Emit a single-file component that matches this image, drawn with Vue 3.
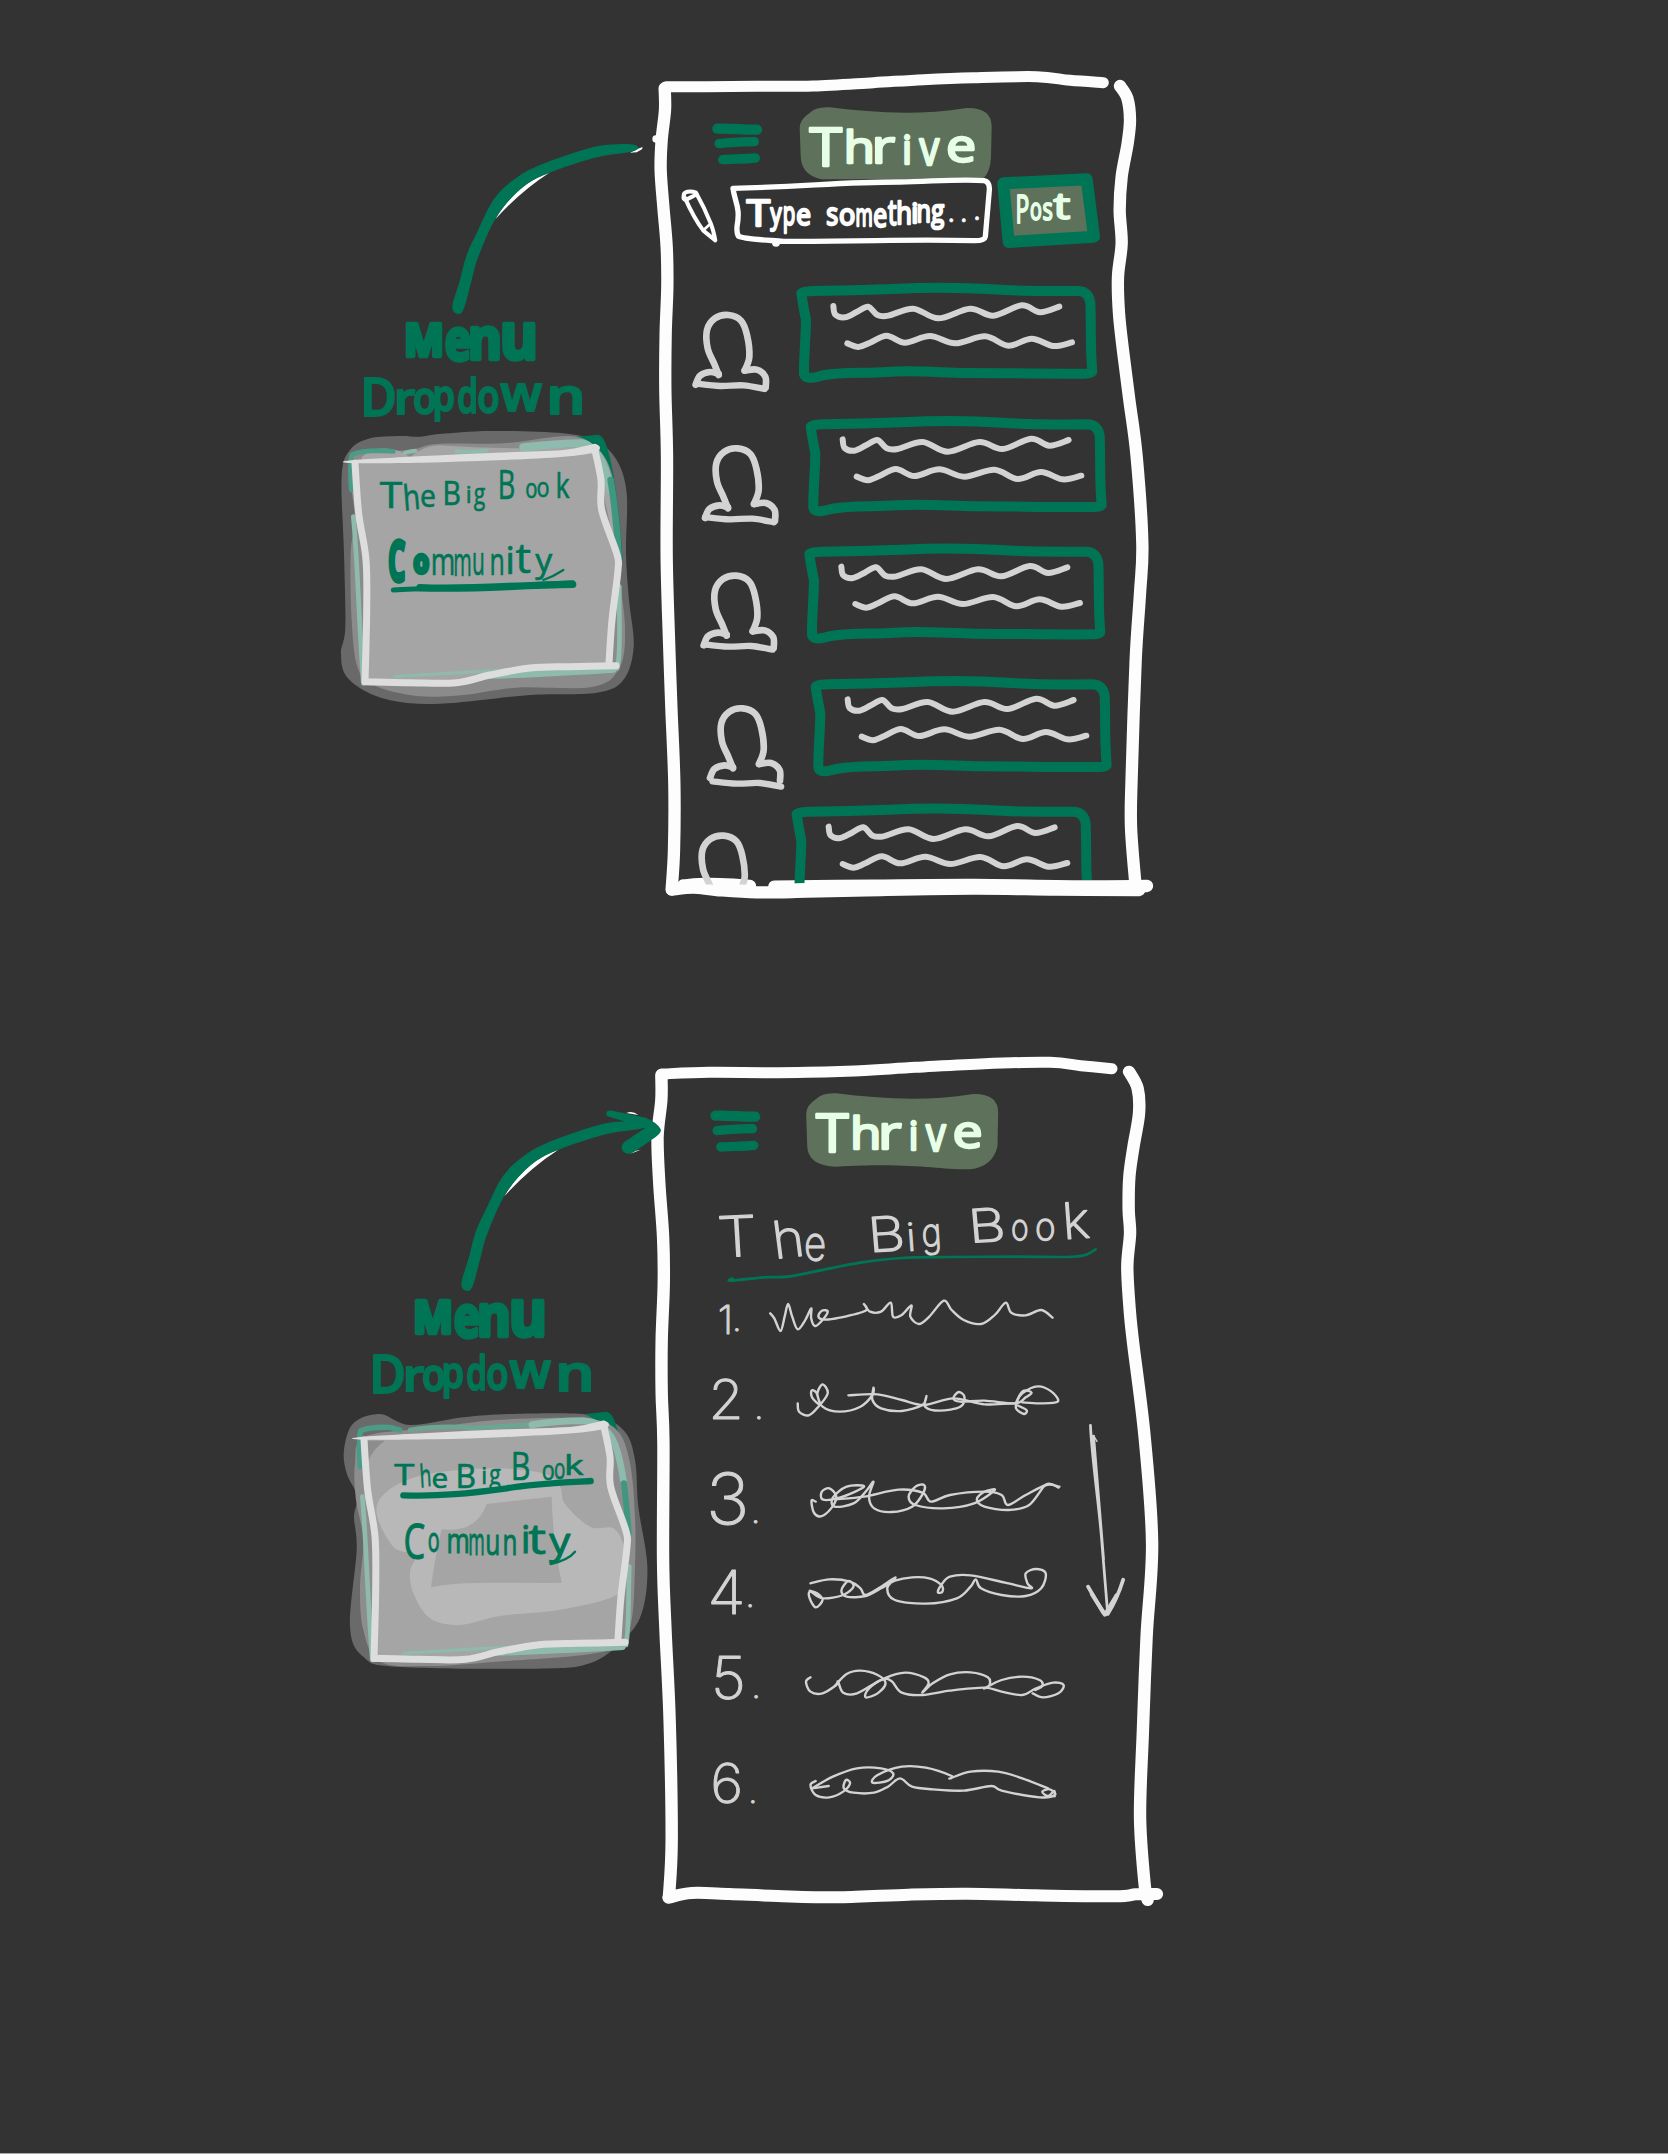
<script setup>
// Smooth curve through a list of points (Catmull-Rom converted to cubic beziers)
function curve(flat, closed = false) {
  const p = []
  for (let i = 0; i < flat.length; i += 2) p.push([flat[i], flat[i + 1]])
  const n = p.length
  const at = (i) => (closed ? p[(i + n) % n] : p[Math.max(0, Math.min(n - 1, i))])
  let d = `M${p[0][0]} ${p[0][1]}`
  for (let i = 0; i < (closed ? n : n - 1); i++) {
    const [a, b, c, e] = [at(i - 1), at(i), at(i + 1), at(i + 2)]
    d += `C${b[0] + (c[0] - a[0]) / 6} ${b[1] + (c[1] - a[1]) / 6} ${c[0] - (e[0] - b[0]) / 6} ${c[1] - (e[1] - b[1]) / 6} ${c[0]} ${c[1]}`
  }
  return closed ? d + 'Z' : d
}

// Side bearings as fractions of the advance: [left, right]
const bearings = {
  T: [0.02, 0.02], M: [0.11, 0.11], D: [0.13, 0.07], B: [0.15, 0.07], C: [0.09, 0.05], P: [0.16, 0.06],
  h: [0.14, 0.12], n: [0.14, 0.12], m: [0.09, 0.08], u: [0.13, 0.14], r: [0.2, 0.02], p: [0.14, 0.09],
  d: [0.09, 0.14], o: [0.09, 0.09], e: [0.09, 0.07], s: [0.08, 0.08], g: [0.04, 0.03], k: [0.15, 0],
  v: [0, 0], y: [0, 0], w: [0.02, 0.02], t: [0.05, 0.05],
}
// Letters are written as [char, left, right, baseline, size, weight, outline, tilt]
function letters(list, weight, outline) {
  return list.map(([s, l, r, y, size, w = weight, sw = outline, tilt = 0]) => {
    const base = { s, y, size, weight: w, sw, tilt }
    const b = bearings[s]
    if (!b) return { ...base, x: s === ' ' ? l : l - size * 0.08 + sw / 2 }
    const adv = (r - l - sw) / (1 - b[0] - b[1])
    return { ...base, x: l + sw / 2 - adv * b[0], len: adv }
  })
}

const frameTop = [
  curve([78, 80, 200, 80, 350, 79, 520, 78, 700, 68, 850, 59, 1000, 53, 1190, 50, 1290, 61, 1390, 68]),
  curve([74, 85, 75, 150, 65, 240, 62, 330, 70, 440, 80, 560, 82, 680, 77, 820, 76, 990, 81, 1190, 80, 1490, 87, 1740, 94, 1940, 103, 2170, 102, 2370, 95, 2488]),
  curve([96, 2489, 160, 2483, 230, 2490, 350, 2497, 500, 2495, 680, 2491, 1000, 2486, 1250, 2489, 1498, 2490]),
  curve([130, 2476, 200, 2472, 280, 2474, 330, 2478]),
  curve([403, 2480, 700, 2477, 1000, 2475, 1300, 2479, 1521, 2478]),
  curve([1440, 78, 1462, 115, 1470, 180, 1463, 250, 1445, 350, 1439, 450, 1445, 550, 1434, 650, 1437, 760, 1450, 880, 1468, 1020, 1490, 1190, 1507, 1450, 1500, 1600, 1487, 1800, 1475, 2150, 1473, 2300, 1486, 2470]),
]
const frameBottom = [
  curve([63, 72, 200, 67, 400, 68, 600, 64, 800, 52, 1000, 41, 1190, 37, 1280, 47, 1370, 56]),
  curve([62, 75, 62, 150, 51, 260, 56, 400, 67, 560, 69, 700, 63, 870, 63, 1030, 68, 1180, 67, 1530, 74, 1740, 86, 2010, 92, 2370, 84, 2542]),
  curve([83, 2543, 150, 2529, 260, 2532, 400, 2538, 580, 2542, 780, 2534, 950, 2531, 1150, 2536, 1380, 2539, 1440, 2533, 1501, 2532]),
  curve([1420, 65, 1445, 115, 1449, 190, 1433, 290, 1421, 380, 1419, 480, 1423, 550, 1415, 650, 1422, 780, 1432, 880, 1465, 1158, 1487, 1480, 1471, 1760, 1460, 2050, 1452, 2300, 1465, 2500, 1474, 2550]),
]

const posts = [
  { x: 0, y: 0, base: 0 },
  { x: 28, y: 400, base: 0 },
  { x: 24, y: 782, base: 0 },
  { x: 43, y: 1180, base: 13 },
  { x: -14, y: 1562, base: 0 },
]
const bubble = 'M484 700Q488 694 520 693C600 692 680 690 760 687C860 682 960 682 1060 688C1140 694 1220 694 1315 693Q1346 695 1351 728C1354 800 1350 860 1357 935Q1352 942 1330 941C1200 942 1100 939 980 939C900 938 820 930 740 936C680 941 600 935 545 947Q497 962 492 943C491 900 497 840 498 780C492 750 488 730 484 700Z'
const waves = [
  curve([580, 738, 586, 764, 615, 772, 650, 756, 684, 740, 712, 765, 745, 767, 820, 746, 895, 775, 990, 746, 1060, 767, 1145, 736, 1200, 757, 1258, 740]),
  curve([622, 850, 655, 861, 690, 848, 740, 827, 795, 848, 870, 828, 945, 850, 1035, 829, 1105, 857, 1175, 836, 1240, 858, 1296, 847]),
]
const person = [
  curve([236, 945, 222, 910, 203, 865, 201, 810, 225, 775, 265, 765, 303, 782, 321, 825, 328, 890, 314, 932]),
  curve([236, 942, 210, 936, 180, 947, 167, 974]),
  curve([314, 932, 350, 929, 376, 950, 377, 982]),
]
const personBase = curve([168, 971, 240, 978, 310, 976, 374, 987])

const arrowBody = curve([367, 560, 390, 480, 410, 405, 442, 335, 490, 240, 550, 180, 630, 135, 780, 84, 860, 73, 912, 74, 924, 85, 900, 96, 800, 112, 655, 160, 575, 205, 500, 290, 445, 410, 425, 480, 402, 565, 384, 582], true)

const cardEdges = [
  curve([75, 130, 86, 280, 108, 420, 110, 580, 105, 785]),
  curve([107, 785, 240, 788, 380, 788, 480, 765, 600, 744, 720, 740, 858, 737]),
  curve([793, 82, 813, 180, 815, 270, 860, 400, 864, 450, 846, 600, 837, 728]),
]
const cardTop = curve([64, 121, 280, 108, 500, 98, 700, 90, 795, 73, 800, 95, 700, 110, 500, 121, 280, 128, 66, 129], true)

const menuLabels = [
  letters([['M', 229, 336, 708, 136], ['e', 345, 424, 720, 174], ['n', 422, 510, 716, 170], ['u', 518, 615, 718, 196]], 700, 13),
  letters([['D', 102, 196, 888, 155], ['r', 202, 258, 882, 132], ['o', 252, 316, 882, 135], ['p', 314, 372, 874, 132], ['d', 384, 438, 878, 142], ['o', 445, 506, 878, 143], ['w', 510, 636, 874, 146], ['n', 662, 756, 882, 152]], 600, 6),
]
const topMenu = [
  letters([['T', 150, 217, 264, 110], ['h', 228, 268, 272, 105, 400, 2, -6], ['e', 273, 315, 260, 92], [' ', 320, 0, 260, 60], ['B', 345, 390, 255, 98], ['i', 412, 0, 250, 70], ['g', 432, 466, 252, 88], [' ', 480, 0, 250, 60], ['B', 510, 553, 237, 122], ['o', 588, 620, 233, 82], ['o', 622, 656, 232, 84], ['k', 682, 720, 234, 104]], 400, 2),
  letters([['C', 172, 230, 483, 165, 700, 13], ['o', 248, 299, 460, 98, 700, 13], ['m', 308, 371, 465, 116], ['m', 374, 422, 468, 120], ['u', 430, 460, 466, 118], ['n', 484, 520, 466, 115], ['i', 534, 0, 462, 116], ['t', 558, 602, 460, 128], ['y', 615, 668, 456, 100]], 400, 2),
]
const bottomMenu = [
  letters([['T', 193, 253, 255, 86], ['h', 275, 303, 263, 94, 400, 2, -6], ['e', 308, 352, 263, 82], [' ', 360, 0, 260, 50], ['B', 385, 435, 265, 98], ['i', 458, 0, 252, 70], ['g', 478, 512, 252, 84], [' ', 525, 0, 250, 60], ['B', 550, 598, 239, 116], ['o', 638, 672, 240, 84], ['o', 674, 704, 236, 88], ['k', 710, 762, 226, 80]], 400, 2),
  letters([['C', 225, 284, 478, 150], ['o', 295, 327, 456, 104], ['m', 354, 415, 460, 106], ['m', 418, 462, 465, 114], ['u', 470, 506, 464, 112], ['n', 522, 558, 464, 110], ['i', 580, 0, 460, 116], ['t', 596, 647, 461, 128], ['y', 656, 722, 462, 112]], 400, 3),
]

const thrive = letters([['T', 507, 608, 319, 158], ['h', 620, 697, 308, 134], ['r', 705, 767, 310, 136], ['i', 792, 0, 313, 120], ['v', 835, 901, 314, 140], ['e', 923, 1006, 307, 138]], 400, 7)
const typeHere = letters([['T', 318, 392, 498, 110], ['y', 388, 428, 492, 88], ['p', 430, 466, 494, 100], ['e', 469, 513, 494, 90], [' ', 525, 0, 494, 60], ['s', 558, 595, 494, 92], ['o', 598, 645, 494, 90], ['m', 648, 698, 497, 94], ['e', 700, 742, 500, 96], ['t', 742, 772, 495, 106], ['h', 772, 814, 491, 92], ['i', 817, 0, 489, 84], ['n', 832, 871, 487, 92], ['g', 872, 915, 486, 92], ['.', 929, 0, 486, 80, 400, 2], ['.', 966, 0, 486, 80, 400, 2], ['.', 1006, 0, 479, 80, 400, 2]], 400, 7)
const postLabel = letters([['P', 1130, 1168, 490, 114], ['o', 1170, 1205, 479, 92], ['s', 1207, 1239, 480, 94], ['t', 1240, 1291, 477, 108]], 400, 6)
const heading = letters([['T', 228, 343, 622, 168, 200, 4, -3], ['h', 402, 474, 627, 155, 200, 4, -7], ['e', 480, 538, 631, 144], [' ', 560, 0, 620, 80], ['B', 680, 768, 607, 144, 200, 4, -4], ['i', 784, 0, 603, 116, 200, 4, -4], ['g', 820, 878, 592, 118, 200, 4, -4], [' ', 900, 0, 600, 80], ['B', 972, 1060, 578, 138, 200, 4, -4], ['o', 1080, 1126, 569, 108], ['o', 1150, 1203, 570, 112], ['k', 1240, 1312, 568, 150, 200, 4, -4]], 200, 4)

const items = [
  { n: '1.', x: [226, 268], y: [853, 843], size: 118, dy: 0, lines: [
    curve([378, 790, 390, 805, 408, 843, 420, 800, 430, 762, 442, 800, 458, 838, 480, 810, 497, 775, 497, 805, 508, 828, 528, 812, 545, 785, 528, 782, 518, 800, 535, 809, 580, 803, 655, 782, 650, 762, 668, 785, 700, 785, 728, 758, 735, 800, 760, 795, 788, 766, 785, 800, 810, 822, 840, 800, 882, 752, 905, 780, 940, 810, 990, 822, 1030, 795, 1062, 758, 1078, 788, 1120, 796, 1165, 780, 1198, 803])] },
  { n: '2.', x: [199, 332], y: [1080, 1078], size: 165, dy: 28, lines: [
    curve([458, 1032, 462, 1057, 490, 1068, 518, 1042, 545, 1002, 530, 975, 515, 1002, 522, 1035, 500, 1015, 498, 994, 512, 1000, 530, 1042, 580, 1057, 640, 1042, 675, 1007, 678, 985, 675, 1022, 700, 1047, 760, 1055, 820, 1037, 832, 1010, 828, 1042, 870, 1054, 930, 1042, 942, 1012, 925, 998, 910, 1017, 930, 1027, 1000, 1024, 1090, 1032, 1120, 1014, 1137, 1000, 1115, 994, 1098, 1017, 1092, 1047, 1115, 1064, 1122, 1052, 1092, 1036]),
    curve([605, 1008, 690, 1005, 760, 1022, 825, 1037, 910, 1017, 1000, 1035, 1088, 1032]),
    curve([1092, 1030, 1110, 1002, 1155, 981, 1195, 997, 1213, 1027, 1160, 1032, 1110, 1029])] },
  { n: '3.', x: [192, 322], y: [1394, 1392], size: 212, dy: 28, lines: [
    curve([510, 1327, 498, 1324, 505, 1360, 525, 1371, 555, 1347, 570, 1312, 550, 1287, 528, 1297, 530, 1320, 570, 1318, 625, 1297, 650, 1280, 600, 1282, 560, 1315, 565, 1342, 620, 1332, 655, 1297, 678, 1267, 665, 1312, 680, 1347, 730, 1358, 790, 1342, 822, 1302, 825, 1277, 800, 1282, 780, 1312, 800, 1337, 880, 1347, 970, 1332, 1030, 1292, 1000, 1297, 978, 1320, 1000, 1342, 1070, 1352, 1130, 1337, 1180, 1275, 1215, 1285]),
    curve([570, 1320, 650, 1312, 750, 1291, 820, 1300, 845, 1327, 900, 1307, 1000, 1297, 1050, 1307, 1068, 1337, 1120, 1307, 1180, 1277, 1218, 1282])] },
  { n: '4.', x: [196, 306], y: [1664, 1642], size: 180, dy: 28, lines: [
    curve([495, 1572, 550, 1560, 610, 1567, 640, 1587, 655, 1607, 700, 1582, 742, 1554, 718, 1587, 740, 1622, 830, 1633, 920, 1617, 960, 1582, 975, 1560, 990, 1587, 1050, 1607, 1120, 1610, 1165, 1587, 1178, 1542, 1150, 1529, 1120, 1542, 1125, 1572, 1135, 1587, 1060, 1570, 960, 1548, 900, 1552, 875, 1577, 865, 1599, 878, 1597, 875, 1577, 840, 1557, 790, 1554, 740, 1564, 700, 1587, 655, 1610, 600, 1612, 585, 1592, 605, 1565, 620, 1582, 590, 1607, 530, 1617, 495, 1597, 492, 1615, 510, 1644, 530, 1622, 515, 1602, 493, 1594])] },
  { n: '5.', x: [206, 324], y: [1893, 1890], size: 175, dy: 55, lines: [
    curve([495, 1827, 482, 1840, 495, 1870, 530, 1875, 570, 1850, 575, 1840, 590, 1873, 630, 1875, 700, 1835, 730, 1838, 760, 1873, 820, 1880, 900, 1867, 1000, 1858, 1050, 1870, 1110, 1880, 1150, 1860, 1200, 1843, 1230, 1850, 1215, 1875, 1170, 1887, 1140, 1875]),
    curve([568, 1850, 600, 1817, 640, 1807, 690, 1820, 713, 1845, 690, 1875, 655, 1887, 665, 1860, 710, 1830, 770, 1813, 825, 1827, 838, 1845, 820, 1873, 850, 1845, 900, 1818, 960, 1812, 1010, 1827, 1015, 1850, 1000, 1860, 1050, 1835, 1110, 1825, 1160, 1835, 1168, 1853, 1148, 1865])] },
  { n: '6.', x: [204, 314], y: [2203, 2205], size: 164, dy: 55, lines: [
    curve([510, 2138, 495, 2150, 510, 2180, 550, 2187, 590, 2170, 610, 2145, 598, 2135, 592, 2160, 620, 2173, 680, 2173, 720, 2155, 755, 2130, 790, 2155, 850, 2163, 940, 2167, 1020, 2153, 1050, 2167, 1160, 2187, 1205, 2180, 1190, 2163, 1168, 2170, 1185, 2183, 1203, 2168, 1204, 2184]),
    curve([500, 2160, 560, 2125, 630, 2100, 700, 2100, 735, 2115, 720, 2137, 675, 2143, 690, 2120, 760, 2095, 830, 2098, 905, 2123, 900, 2130, 960, 2110, 1040, 2110, 1110, 2130, 1185, 2160]),
    'M500 2160L548 2153'] },
]
const titleRule = curve([268, 685, 264, 692, 360, 682, 430, 680, 520, 662, 640, 638, 760, 624, 900, 621, 1100, 620, 1240, 621, 1290, 616, 1323, 598])
</script>

<template>
  <main class="board">
    <!-- Community feed -->
    <section class="sketch">
      <svg class="canvas" width="1668" height="1000" viewBox="0 0 1668 1000">
        <g transform="translate(640 60) scale(.333333)">
          <path class="line paper-line" stroke-width="22" d="M48 237L60 238" />
          <path v-for="(d, i) in frameTop" :key="i" class="line paper-line" :stroke-width="i === 0 ? 33 : 37" :d="d" />
          <g class="line green-line">
            <path stroke-width="31" d="M232 206C270 204 310 210 351 209" />
            <path stroke-width="28" d="M237 251C270 247 300 246 343 245" />
            <path stroke-width="28" d="M248 299C280 296 310 298 346 294" />
          </g>
          <path class="badge" d="M508 160Q525 140 570 142C700 158 830 168 980 144Q1055 142 1055 200L1053 290Q1052 335 1028 358L545 358Q482 345 482 285L479 205Q479 178 508 160Z" />
          <text class="mint"><tspan v-for="(g, i) in thrive" :key="i" :x="g.x" :y="g.y" :textLength="g.len" lengthAdjust="spacingAndGlyphs" :font-size="g.size" :font-weight="g.weight" :stroke-width="g.sw">{{ g.s }}</tspan></text>

          <g class="line paper-line" stroke-width="12">
            <path d="M131 407C130 396 150 390 168 398C174 406 150 411 138 420Q128 420 131 407Z" />
            <path d="M134 412C150 448 170 485 190 512L226 541C222 520 218 505 212 490C200 460 186 430 170 402" />
            <path d="M190 511L213 490" stroke-width="8" />
          </g>
          <path class="line paper-line" stroke-width="16" d="M279 385C500 380 600 366 780 366C880 364 970 356 1032 362Q1050 366 1048 390L1036 530Q1034 543 1000 542C800 536 700 545 430 544C380 540 310 538 295 528Q290 520 291 500C302 440 285 430 279 385Z" />
          <circle class="paper" cx="408" cy="548" r="12" />
          <path class="post-button" d="M1090 370L1340 358L1362 530L1106 546Z" />
          <text class="paper"><tspan v-for="(g, i) in typeHere" :key="i" :x="g.x" :y="g.y" :textLength="g.len" lengthAdjust="spacingAndGlyphs" :font-size="g.size" :font-weight="g.weight" :stroke-width="g.sw">{{ g.s }}</tspan></text>
          <text class="mint"><tspan v-for="(g, i) in postLabel" :key="i" :x="g.x" :y="g.y" :textLength="g.len" lengthAdjust="spacingAndGlyphs" :font-size="g.size" :font-weight="g.weight" :stroke-width="g.sw">{{ g.s }}</tspan></text>

          <clipPath id="feed"><path d="M100 600H1430V2460H1000L520 2460L496 2469L320 2474H100Z" /></clipPath>
          <g clip-path="url(#feed)">
            <g v-for="(post, i) in posts" :key="i" :transform="`translate(${post.x} ${post.y})`">
              <path class="line green-line" stroke-width="30" :d="bubble" />
              <g class="line grey-line">
                <path v-for="d in waves" :key="d" stroke-width="18" :d="d" />
                <path v-for="d in person" :key="d" stroke-width="20" :d="d" />
                <path stroke-width="19" :d="personBase" :transform="`translate(${post.base / 2} ${post.base})`" />
              </g>
            </g>
          </g>
        </g>

        <g transform="translate(330 120) scale(.333333)">
          <path class="paper" d="M496 298C535 230 590 180 658 158Q570 215 496 298ZM900 98L924 86L938 81L936 88L920 97Z" />
          <path class="green" :d="arrowBody" />
          <text v-for="(word, k) in menuLabels" :key="k" class="green"><tspan v-for="(g, i) in word" :key="i" :x="g.x" :y="g.y" :textLength="g.len" lengthAdjust="spacingAndGlyphs" :font-size="g.size" :font-weight="g.weight" :stroke-width="g.sw">{{ g.s }}</tspan></text>
        </g>

        <g transform="translate(330 420) scale(.333333)">
          <path fill="#696969" :d="curve([35, 170, 60, 90, 120, 55, 210, 48, 270, 50, 330, 42, 480, 33, 700, 40, 800, 65, 860, 120, 890, 220, 888, 400, 897, 540, 911, 680, 880, 780, 800, 818, 600, 825, 380, 848, 240, 850, 130, 825, 50, 770, 33, 700, 46, 620, 42, 400], true)" />
          <path fill="#007555" d="M740 50L805 44Q820 46 832 85C850 140 868 260 878 420L850 400L790 80Z" />
          <path fill="#8b8b8b" :d="curve([60, 150, 90, 100, 240, 90, 320, 72, 520, 70, 720, 48, 800, 85, 845, 160, 860, 300, 866, 450, 885, 620, 870, 740, 790, 800, 560, 803, 400, 825, 260, 828, 130, 795, 82, 740, 65, 600, 62, 400, 75, 300], true)" />
          <path fill="#a5a5a5" d="M95 112Q120 84 175 86Q215 90 240 112Q280 76 330 76Q500 88 700 84L795 78Q850 120 850 260L862 420L800 120L95 128Z" />
          <g class="line" stroke="#8fbbae">
            <path stroke="#4b9c86" stroke-width="14" d="M64 210C60 170 60 120 66 104Q90 92 150 92L190 94" />
            <path stroke-width="12" d="M225 98Q240 94 256 92M380 94Q420 98 470 92" />
            <path stroke-width="24" d="M580 82C660 74 700 70 758 70C800 78 830 150 842 210" />
            <path stroke="#409780" stroke-width="20" d="M842 180C855 260 862 330 866 410" />
            <path stroke-width="14" d="M70 290C84 440 84 560 100 790M868 500C866 600 874 690 862 745" />
            <path stroke-width="20" d="M110 785C350 768 560 768 850 748" />
          </g>
          <path fill="#a5a5a5" d="M76 125L795 85L815 270L863 420L840 735C600 740 450 770 370 785L105 785L108 450Z" />
          <path class="line" stroke="#8fbbae" stroke-width="9" d="M195 770C330 760 440 755 560 748" />
          <path fill="#dddddd" :d="cardTop" />
          <path v-for="d in cardEdges" :key="d" class="line" stroke="#dddddd" stroke-width="21" :d="d" />
          <path class="line green-line" stroke-width="15" d="M190 510C300 500 420 512 600 494L728 488" />
          <path class="line green-line" stroke-width="22" d="M270 503C420 510 540 496 728 493" />
          <path class="line green-line" stroke-width="7" d="M640 480Q670 470 700 450" />
          <text v-for="(word, k) in topMenu" :key="k" class="green"><tspan v-for="(g, i) in word" :key="i" :x="g.x" :y="g.y" :rotate="g.tilt" :textLength="g.len" lengthAdjust="spacingAndGlyphs" :font-size="g.size" :font-weight="g.weight" :stroke-width="g.sw">{{ g.s }}</tspan></text>
        </g>
      </svg>
    </section>

    <!-- The Big Book -->
    <section class="sketch">
      <svg class="canvas" width="1668" height="1153" viewBox="0 1000 1668 1153">
        <g transform="translate(640 1050) scale(.344387 .333333)">
          <path v-for="(d, i) in frameBottom" :key="i" class="line paper-line" :stroke-width="i === 0 ? 33 : 36" :d="d" />
        </g>
        <g transform="translate(635.5 1047) scale(.333333)" class="line green-line">
          <path stroke-width="31" d="M240 206C278 204 318 210 359 209" />
          <path stroke-width="28" d="M245 251C278 247 308 246 351 245" />
          <path stroke-width="28" d="M256 300C289 297 319 299 355 295" />
        </g>
        <g transform="translate(646.5 1046) scale(.333333)">
          <path class="badge" d="M508 160Q525 140 570 142C700 158 830 168 980 144Q1055 142 1055 200L1053 300Q1040 362 970 370C880 372 800 348 570 362Q482 360 482 296L479 205Q479 178 508 160Z" />
          <text class="mint"><tspan v-for="(g, i) in thrive" :key="i" :x="g.x" :y="g.y" :textLength="g.len" lengthAdjust="spacingAndGlyphs" :font-size="g.size" :font-weight="g.weight" :stroke-width="g.sw">{{ g.s }}</tspan></text>
        </g>

        <g transform="translate(640 1050) scale(.344387 .333333)">
          <text class="thin"><tspan v-for="(g, i) in heading" :key="i" :x="g.x" :y="g.y" :rotate="g.tilt" :textLength="g.len" lengthAdjust="spacingAndGlyphs" :font-size="g.size" :font-weight="g.weight" :stroke-width="g.sw">{{ g.s }}</tspan></text>
          <path class="line green-line" stroke-width="8" :d="titleRule" />
          <g v-for="item in items" :key="item.n" :transform="`translate(0 ${item.dy})`">
            <text class="thin" font-weight="200" stroke-width="3" :x="item.x.join(' ')" :y="item.y.join(' ')" :font-size="item.size">{{ item.n[0] }}<tspan font-size="96">.</tspan></text>
            <path v-for="d in item.lines" :key="d" class="line grey-line" stroke-width="7" :d="d" />
          </g>
          <g class="line grey-line" transform="translate(0 28)">
            <path stroke-width="8" d="M1308 1098C1312 1200 1335 1350 1342 1460L1358 1662M1317 1130C1325 1230 1338 1400 1346 1500" />
            <path stroke-width="4" d="M1318 1130L1327 1146" />
            <path stroke-width="11" d="M1301 1582Q1325 1625 1345 1660L1358 1664Q1385 1620 1403 1561" />
            <path stroke-width="12" d="M1312 1604L1350 1666L1384 1608" />
          </g>
        </g>

        <g transform="translate(339 1097) scale(.333333)">
          <path class="paper" d="M496 298C535 230 590 180 658 158Q570 215 496 298ZM862 48Q880 40 898 54ZM875 170L905 158L887 162Z" />
          <path class="green" :d="arrowBody" />
          <path class="green" d="M802 47Q805 38 820 41L920 62Q958 78 966 98Q966 108 950 120L885 165Q862 178 850 160Q844 146 856 135L918 93L880 94L860 74L810 59Q800 56 802 47Z" />
          <text v-for="(word, k) in menuLabels" :key="k" class="green"><tspan v-for="(g, i) in word" :key="i" :x="g.x" :y="g.y" :textLength="g.len" lengthAdjust="spacingAndGlyphs" :font-size="g.size" :font-weight="g.weight" :stroke-width="g.sw">{{ g.s }}</tspan></text>
        </g>

        <g transform="translate(330 1400) scale(.333333)">
          <path fill="#6a6a6a" :d="curve([42, 150, 70, 70, 150, 42, 240, 75, 400, 52, 550, 42, 780, 45, 880, 90, 915, 180, 925, 320, 952, 500, 935, 640, 880, 720, 780, 790, 620, 806, 200, 800, 100, 770, 60, 680, 80, 450, 72, 350, 82, 290, 50, 220], true)" />
          <path fill="#007555" d="M765 42L830 35Q847 38 858 75C880 135 895 260 905 410L880 390L815 70Z" />
          <path fill="#8d8d8d" :d="curve([75, 190, 105, 110, 300, 85, 500, 60, 760, 55, 860, 90, 900, 190, 915, 350, 915, 500, 905, 660, 870, 735, 760, 765, 500, 785, 300, 798, 150, 785, 100, 690, 90, 560, 100, 420, 78, 300], true)" />
          <g class="line" stroke="#8fbbae">
            <path stroke="#4b9c86" stroke-width="16" d="M90 200C88 160 86 110 92 92Q120 80 180 82L210 90" />
            <path stroke="#6ba693" stroke-width="14" d="M240 90C320 76 390 80 430 84C500 80 560 76 600 74" />
            <path stroke-width="20" d="M606 74C660 66 710 62 760 62C850 68 866 150 880 240" />
            <path stroke="#409780" stroke-width="18" d="M882 250C888 300 892 340 896 400" />
            <path stroke-width="14" d="M97 290C110 440 110 560 127 780M898 500C894 600 898 680 888 735" />
            <path stroke-width="20" d="M137 776C370 758 587 758 877 740" />
          </g>
          <path fill="#a5a5a5" d="M103 116L822 75L842 260L890 410L867 725C627 730 477 760 397 775L132 775L135 440Z" />
          <path fill="#8d8d8d" d="M112 122L165 122Q125 150 112 190Z" />
          <path fill="#b8b8b8" fill-rule="evenodd" :d="curve([140, 340, 170, 275, 280, 225, 480, 205, 640, 220, 690, 260, 705, 312, 780, 380, 850, 385, 882, 440, 882, 500, 870, 580, 700, 628, 510, 648, 390, 675, 300, 655, 250, 580, 240, 515, 255, 465, 190, 440], true) + 'M470 312L665 290Q668 420 695 548C560 552 400 540 303 562Q315 470 335 388Q440 400 470 312Z'" />
          <path class="line" stroke="#8fbbae" stroke-width="9" d="M222 760C357 750 467 745 587 738" />
          <g transform="translate(27 -10)">
            <path fill="#dddddd" :d="cardTop" />
            <path v-for="d in cardEdges" :key="d" class="line" stroke="#dddddd" stroke-width="21" :d="d" />
          </g>
          <path class="line green-line" stroke-width="19" d="M220 286C330 290 420 280 530 265C620 250 700 248 782 243" />
          <path class="line green-line" stroke-width="7" d="M735 455Q715 480 662 492" />
          <text v-for="(word, k) in bottomMenu" :key="k" class="green"><tspan v-for="(g, i) in word" :key="i" :x="g.x" :y="g.y" :rotate="g.tilt" :textLength="g.len" lengthAdjust="spacingAndGlyphs" :font-size="g.size" :font-weight="g.weight" :stroke-width="g.sw">{{ g.s }}</tspan></text>
        </g>
      </svg>
    </section>
  </main>
</template>

<style>
body {
  margin: 0;
  background: #333333;
}
</style>

<style scoped>
.board {
  display: flex;
  flex-direction: column;
  width: 1668px;
  background: #333333;
  border-bottom: 1px solid #a9a7a8;
}
.canvas {
  display: block;
}
.line {
  fill: none;
  stroke-linecap: round;
  stroke-linejoin: round;
}
.paper-line {
  stroke: #fdfdfd;
}
.green-line {
  stroke: #007555;
}
.grey-line {
  stroke: #d3d3d3;
}
.badge {
  fill: #5e725b;
}
.post-button {
  fill: #5e725b;
  stroke: #007555;
  stroke-width: 36;
  stroke-linejoin: round;
}
.paper {
  fill: #fdfdfd;
}
.green {
  fill: #007555;
}
.mint {
  fill: #e6ffe6;
}
text {
  font-family: "Open Sans", "Noto Sans", sans-serif;
  stroke-linejoin: round;
}
text.paper {
  stroke: #fdfdfd;
}
text.green {
  stroke: #007555;
}
text.mint {
  stroke: #e6ffe6;
}
text.thin {
  font-family: Inter, "Open Sans", sans-serif;
  fill: #d3d3d3;
  stroke: #d3d3d3;
}
</style>
